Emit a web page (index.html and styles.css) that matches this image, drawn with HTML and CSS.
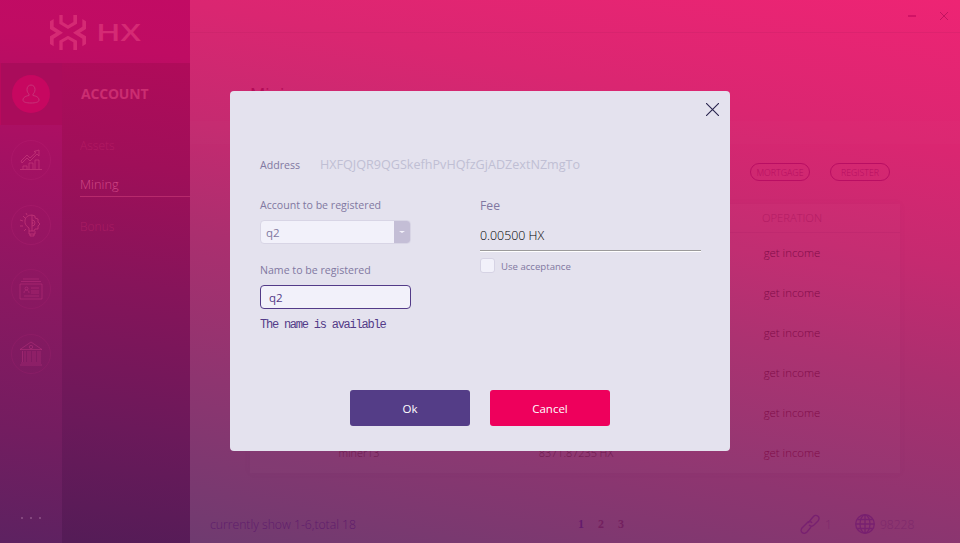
FILE: index.html
```
<!DOCTYPE html>
<html lang="en">
<head>
<meta charset="utf-8">
<title>HX Wallet</title>
<link rel="stylesheet" href="styles.css">
</head>
<body>
<div class="app">
  <aside class="sidebar">
    <div class="brand">
      <svg class="brand-mark" viewBox="150 45 108 105" width="36" height="35">
        <path d="M178 45h10v21l16 10 16-10V45h11v26l-27 16-26-16zM178 150h10v-23l16-9 16 9v23h11v-28l-27-15-26 15zM150 64l11-7v23l28 18-28 18v23l-11-7v-23l18-11-18-11zM258 64l-11-7v23l-28 18 28 18v23l11-7v-23l-18-11 18-11z"/>
      </svg>
      <svg class="brand-name" viewBox="0 0 44 17" width="44" height="17"><text x="-2" y="17" textLength="45" lengthAdjust="spacingAndGlyphs">HX</text></svg>
    </div>
    <div class="nav">
      <nav class="rail">
        <div class="rail-item active"><span class="disc"><svg width="18" height="20" viewBox="0 0 18 20"><path d="M9 1c-2.500 0-4 2-4 4.500s1 3.500 2 4.500v1.500C4 12 1 13.200 1 16c0 2.200 3.500 3 8 3s8-.8 8-3c0-2.800-3-4-6-4.500V10c1-1 2-2 2-4.500S11.500 1 9 1z"/></svg></span></div>
        <div class="rail-item"><span class="disc"><svg width="22" height="22" viewBox="0 0 22 22"><path d="M0 20.500h22M3 20v-3h4v3M9 20v-6h4v6M15 20v-9h4v9M1 12l6-6 3 3 6-5.500-2-1L19 1v6l-2-2-7 7-3-3-5 5z"/></svg></span></div>
        <div class="rail-item"><span class="disc"><svg width="22" height="24" viewBox="0 0 22 24"><path d="M9 18v-3C6 13 4.500 11 5 7c.4-3 3-5 7-5v16M12 2l3 1v2l3 1v3l2 2-2 2v3h-3l-1 2H9v3h6v-3M10 21v2h4v-2M12 7a3 3 0 0 1 0 6M12 9a1 1 0 0 1 0 2M3 3l2 2M0 7l3 1M0 13h3M4 18l2-2M6 0l1 2"/></svg></span></div>
        <div class="rail-item"><span class="disc"><svg width="24" height="22" viewBox="0 0 24 22"><path d="M1 6h22v15H1zM2 3.500h20M4 1h16M5 15c0-4 5-4 5 0M12 10h8M12 13h8M12 15h8M5 18h15"/><circle cx="7.500" cy="10.500" r="1.500"/></svg></span></div>
        <div class="rail-item"><span class="disc"><svg width="24" height="25" viewBox="0 0 24 25"><path d="M1 8.500L12 1l11 7.500zM3.500 10v11M6 10v11M9 10v11M11 10v11M14 10v11M16 10v11M19 10v11M21 10v11M2 22h20M1 24h22"/><circle cx="12" cy="6" r="1.700"/></svg></span></div>
        <div class="more"><i></i><i></i><i></i></div>
      </nav>
      <div class="submenu">
        <h2>ACCOUNT</h2>
        <a class="dim">Assets</a>
        <a class="current">Mining</a>
        <a class="dim">Bonus</a>
      </div>
    </div>
  </aside>

  <main class="main">
    <header class="titlebar">
      <svg width="8" height="2"><path d="M0 1h8"/></svg>
      <svg class="win-close" width="8" height="8"><path d="M0 0l8 8M8 0L0 8"/></svg>
    </header>
    <div class="heading"><h1>Mining</h1></div>
    <div class="band"></div>
    <div class="actions"><button>MORTGAGE</button><button>REGISTER</button></div>
    <section class="table">
      <div class="row head"><span></span><span></span><span>OPERATION</span></div>
      <div class="row"><span></span><span></span><span>get income</span></div>
      <div class="row"><span></span><span></span><span>get income</span></div>
      <div class="row"><span></span><span></span><span>get income</span></div>
      <div class="row"><span></span><span></span><span>get income</span></div>
      <div class="row"><span></span><span></span><span>get income</span></div>
      <div class="row"><span class="muted">miner13</span><span class="muted">8371.87235 HX</span><span>get income</span></div>
    </section>
    <footer class="footer">
      <span class="summary">currently show 1-6,total 18</span>
      <span class="pages"><b class="on">1</b><b>2</b><b>3</b></span>
      <span class="status">
        <svg width="20" height="20" viewBox="0 0 20 20"><path d="M8 9l5-6c3-4 8 0 5 4l-4 4c-2 2-4 1-5 0M12 9c-1-2-4-2-5 0l-5 5c-3 4 2 7 5 4l4-5"/></svg><em class="peers">1</em>
        <svg width="20" height="20" viewBox="0 0 20 20"><circle cx="10" cy="10" r="9.300"/><ellipse cx="10" cy="10" rx="5" ry="9"/><path d="M10 1v18M1 10h18M2.500 5.500h15M2.500 14.500h15"/></svg><em>98228</em>
      </span>
    </footer>
  </main>
</div>

<div class="dialog">
  <svg class="dialog-close" width="13" height="13" viewBox="0 0 13 13"><path d="M0 0l13 13M13 0L0 13"/></svg>
  <div class="address"><label>Address</label><span>HXFQJQR9QGSkefhPvHQfzGjADZextNZmgTo</span></div>
  <div class="form">
    <div class="col">
      <label>Account to be registered</label>
      <div class="select"><span>q2</span><i></i></div>
      <label>Name to be registered</label>
      <div class="input">q2</div>
      <p class="hint">The name is available</p>
    </div>
    <div class="col">
      <label class="fee-label">Fee</label>
      <div class="fee">0.00500 HX</div>
      <div class="check"><i></i><span>Use acceptance</span></div>
    </div>
  </div>
  <div class="buttons"><button class="ok">Ok</button><button class="cancel">Cancel</button></div>
</div>
</body>
</html>
```
FILE: styles.css
```
* { box-sizing: border-box; margin: 0; padding: 0; }
body { width: 960px; height: 543px; overflow: hidden; font-family: "Open Sans", "Noto Sans", sans-serif; font-size: 12px; font-weight: 300; }
svg { display: block; fill: none; }
button { font: inherit; }

.app { display: grid; grid-template-columns: 190px 1fr; height: 543px; background: linear-gradient(191deg, #ee2474 0%, #da2671 22%, #c52a70 39%, #ab2f6f 55%, #8e3570 76%, #6f3b70 100%) 190px 0 / 770px 543px no-repeat; }

.sidebar { display: flex; flex-direction: column; background: linear-gradient(188deg, #c20b64 0%, #bf0c63 10%, #a41163 32%, #8a1861 56%, #731d60 80%, #5d2261 100%); }
.brand { height: 63px; display: flex; align-items: flex-start; padding: 15px 0 0 50px; gap: 12px; }
.brand-mark { fill: #d52a74; }
.brand-name { margin-top: 9px; fill: #d52a74; overflow: visible; }
.brand-name text { font: 600 23.500px "Open Sans", sans-serif; }
.nav { flex: 1; display: grid; grid-template-columns: 62px 1fr; }
.rail { display: flex; flex-direction: column; }
.rail-item { height: 64.600px; display: flex; align-items: center; justify-content: center; flex: none; }
.rail-item.active { height: 62px; margin-bottom: 2.700px; background: #aa0c5b; box-shadow: inset 1px 0 #b80a5c; }
.disc { width: 40px; height: 40px; border-radius: 50%; border: 1px solid rgba(195, 45, 125, .2); display: flex; align-items: center; justify-content: center; }
.disc svg { stroke: rgba(195, 55, 120, .75); stroke-width: 1; }
.rail-item:nth-child(n+4) .disc svg { stroke: rgba(195, 55, 130, .42); }
.rail-item:nth-child(n+4) .disc { border-color: rgba(195, 45, 125, .14); }
.active .disc { width: 38px; height: 38px; background: #c70760; border: 0; }
.active .disc svg { stroke: #c83278; }
.more { margin-top: 131px; display: flex; gap: 7px; padding-left: 21px; }
.more i { width: 2px; height: 2px; background: #83467e; }
.submenu { display: flex; flex-direction: column; align-items: flex-start; padding-left: 18px; background: linear-gradient(188deg, #b00b5a 0%, #9f0f59 22%, #86145a 46%, #6b195a 75%, #541c57 100%); }
.submenu h2 { height: 62px; line-height: 62px; padding-left: 1px; font-size: 14px; font-weight: 700; color: #cb2d71; letter-spacing: -.200px; }
.submenu a { height: 31px; font-size: 12px; line-height: 20px; align-self: stretch; color: #b3266c; }
.submenu .dim { margin-top: 11px; color: rgba(195, 40, 110, .5); }
.submenu .current { height: 23px; margin-top: 7px; line-height: 21px; border-bottom: 1px solid #b72a6c; margin-bottom: 8px; color: #d04886; font-size: 12.800px; }
.submenu .current + .dim { margin-top: 12px; }

.main { display: flex; flex-direction: column; }
.titlebar { height: 33px; border-bottom: 1px solid rgba(180, 30, 95, .2); display: flex; justify-content: flex-end; align-items: center; gap: 24px; padding-right: 12px; }
.titlebar svg { stroke: #b90058; }
.titlebar .win-close { stroke: #c31460; }
.heading { height: 88px; padding: 47px 0 0 60px; }
h1 { font-size: 17px; line-height: 28px; font-weight: 400; color: #b30b57; }
.band { height: 23px; background: rgba(255, 255, 255, .01); }
.actions { height: 60px; padding: 19px 70px 0 0; display: flex; justify-content: flex-end; gap: 20px; }
.actions button { width: 60px; height: 18px; border: 1px solid #b90e63; border-radius: 9px; background: none; color: #b60d60; font-size: 8.800px; line-height: 16px; padding-top: 1px; }
.table { width: 650px; height: 269px; margin-left: 60px; background: rgba(255, 255, 255, .015); box-shadow: 0 0 8px rgba(100, 30, 90, .04); }
.row { height: 40px; display: grid; grid-template-columns: 216px 218px 216px; align-items: center; text-align: center; font-size: 11.400px; color: #800c48; }
.row:not(.head) span { padding-bottom: 2px; }
.row.head { height: 29px; color: #b31b63; font-size: 11.200px; padding-bottom: 1px; border-bottom: 1px solid rgba(150, 20, 90, .12); }
.row .muted { color: #6e194f; font-size: 10.800px; padding-left: 2px; }
.footer { height: 68px; margin-top: 2px; display: grid; grid-template-columns: 360px 230px 1fr; align-items: center; padding: 30px 20px 0; color: #5e1c6c; }
.summary { font-size: 12.200px; white-space: nowrap; }
.pages { display: flex; gap: 14px; padding-left: 8px; font: bold 12px "Liberation Serif", serif; color: #73205f; }
.pages .on { color: #641b6d; }
.status { display: flex; align-items: center; stroke: #782070; stroke-width: 1.300; color: #7d286b; }
.status em { font-style: normal; font-size: 12px; margin-left: 5px; }
.status .peers { width: 30px; }

.dialog { position: absolute; left: 230px; top: 91px; width: 500px; height: 360px; border-radius: 4px; background: #e4e2ee; padding: 64px 29px 0 30px; color: #8178a1; font-weight: 400; font-size: 10.600px; }
.dialog-close { position: absolute; right: 11px; top: 12px; stroke: #28234d; stroke-width: 1.100; }
.dialog label { display: block; line-height: 21px; height: 20px; }
.address { display: flex; height: 20px; align-items: center; }
.address label { width: 60px; }
.address span { font-size: 12.600px; color: #c0bfd4; line-height: 20px; }
.form { display: grid; grid-template-columns: 150px 221px; gap: 70px; margin-top: 20px; height: 215px; }
.select { width: 151px; height: 24px; margin: 5px 0 16px; border: 1px solid #d8d5e5; border-radius: 4px; background: #f2f1fa; display: flex; justify-content: space-between; overflow: hidden; font-size: 11.500px; line-height: 23px; padding-left: 5px; }
.select i { width: 16px; background: #c4bed6; display: flex; align-items: center; justify-content: center; }
.select i::after { content: ""; border: 3px solid transparent; border-top: 2px solid #f5f3fb; border-bottom: 0; }
.input { width: 151px; height: 24px; margin-top: 5px; border: 1px solid #533b88; border-radius: 4px; background: #f2f1fa; padding-left: 8px; font-size: 11.500px; line-height: 23px; color: #533b88; }
.hint { margin-top: 9px; font: 12px/14px "Liberation Mono", monospace; letter-spacing: -1.230px; color: #533b88; white-space: nowrap; }
.dialog .fee-label { font-size: 12.200px; line-height: 22px; }
.fee { height: 36px; border-bottom: 1px solid #9c9b9b; box-shadow: 0 1px 0 #fff; font-size: 12.400px; font-weight: 300; line-height: 41px; color: #000; }
.check { display: flex; align-items: center; margin-top: 7px; gap: 6px; font-size: 9.600px; }
.check i { width: 15px; height: 15px; border: 1px solid #d6d3e4; border-radius: 3px; background: #f2f1fa; }
.check span { padding-top: 1px; }
.buttons { display: flex; gap: 20px; padding-left: 90px; margin-top: -20px; }
.buttons button { width: 120px; height: 36px; border: 0; border-radius: 3px; color: #fff; font-size: 11.500px; }
.ok { background: #543d87; }
.cancel { background: #ee005c; }
```
